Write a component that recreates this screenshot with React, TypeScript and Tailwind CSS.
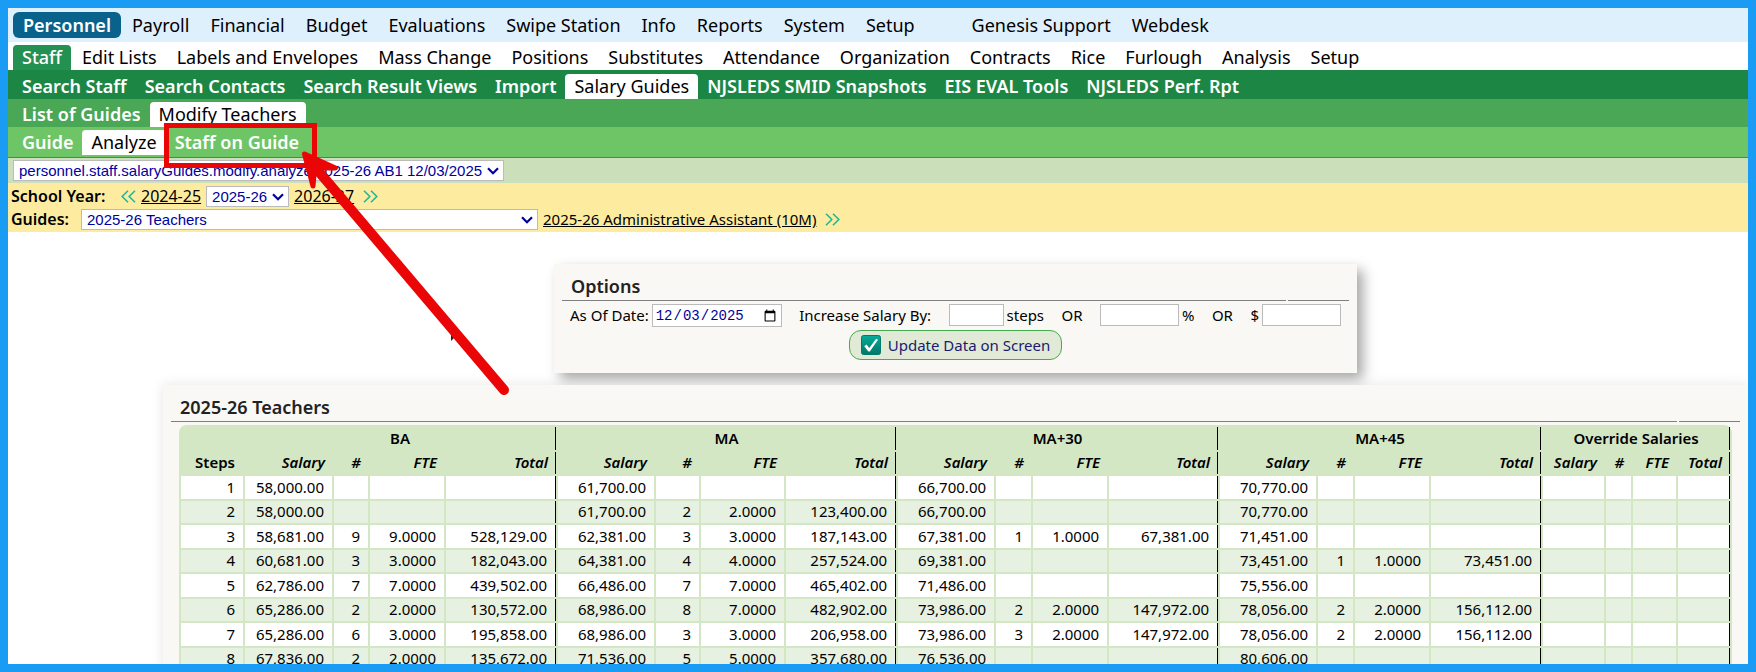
import clsx from 'clsx';
import type {ReactNode} from 'react';

type Tab = {label: string, active?: boolean, spaced?: boolean}

const modules: Tab[] = [
    {label: 'Personnel', active: true},
    {label: 'Payroll'},
    {label: 'Financial'},
    {label: 'Budget'},
    {label: 'Evaluations'},
    {label: 'Swipe Station'},
    {label: 'Info'},
    {label: 'Reports'},
    {label: 'System'},
    {label: 'Setup'},
    {label: 'Genesis Support', spaced: true},
    {label: 'Webdesk'},
];

const sections: Tab[] = [
    {label: 'Staff', active: true},
    {label: 'Edit Lists'},
    {label: 'Labels and Envelopes'},
    {label: 'Mass Change'},
    {label: 'Positions'},
    {label: 'Substitutes'},
    {label: 'Attendance'},
    {label: 'Organization'},
    {label: 'Contracts'},
    {label: 'Rice'},
    {label: 'Furlough'},
    {label: 'Analysis'},
    {label: 'Setup'},
];

const staffTabs: Tab[] = [
    {label: 'Search Staff'},
    {label: 'Search Contacts'},
    {label: 'Search Result Views'},
    {label: 'Import'},
    {label: 'Salary Guides', active: true},
    {label: 'NJSLEDS SMID Snapshots'},
    {label: 'EIS EVAL Tools'},
    {label: 'NJSLEDS Perf. Rpt'},
];

const guideTabs: Tab[] = [
    {label: 'List of Guides'},
    {label: 'Modify Teachers', active: true},
];

const modifyTabs: Tab[] = [
    {label: 'Guide'},
    {label: 'Analyze', active: true},
    {label: 'Staff on Guide'},
];

// Salary, #, FTE, Total
type Cell = [string, string, string, string]

const groups = ['BA', 'MA', 'MA+30', 'MA+45', 'Override Salaries'];
const empty: Cell = ['', '', '', ''];

const rows: Cell[][] = [
    [['58,000.00', '', '', ''], ['61,700.00', '', '', ''], ['66,700.00', '', '', ''], ['70,770.00', '', '', ''], empty],
    [['58,000.00', '', '', ''], ['61,700.00', '2', '2.0000', '123,400.00'], ['66,700.00', '', '', ''], ['70,770.00', '', '', ''], empty],
    [['58,681.00', '9', '9.0000', '528,129.00'], ['62,381.00', '3', '3.0000', '187,143.00'], ['67,381.00', '1', '1.0000', '67,381.00'], ['71,451.00', '', '', ''], empty],
    [['60,681.00', '3', '3.0000', '182,043.00'], ['64,381.00', '4', '4.0000', '257,524.00'], ['69,381.00', '', '', ''], ['73,451.00', '1', '1.0000', '73,451.00'], empty],
    [['62,786.00', '7', '7.0000', '439,502.00'], ['66,486.00', '7', '7.0000', '465,402.00'], ['71,486.00', '', '', ''], ['75,556.00', '', '', ''], empty],
    [['65,286.00', '2', '2.0000', '130,572.00'], ['68,986.00', '8', '7.0000', '482,902.00'], ['73,986.00', '2', '2.0000', '147,972.00'], ['78,056.00', '2', '2.0000', '156,112.00'], empty],
    [['65,286.00', '6', '3.0000', '195,858.00'], ['68,986.00', '3', '3.0000', '206,958.00'], ['73,986.00', '3', '2.0000', '147,972.00'], ['78,056.00', '2', '2.0000', '156,112.00'], empty],
    [['67,836.00', '2', '2.0000', '135,672.00'], ['71,536.00', '5', '5.0000', '357,680.00'], ['76,536.00', '', '', ''], ['80,606.00', '', '', ''], empty],
];

type TabRowProps = {
    tabs: Tab[],
    className: string,
    activeClassName: string
}
function TabRow(props: TabRowProps) {
    return (
        <nav className={clsx('flex items-end pl-[5px] text-lg leading-[25px] whitespace-nowrap', props.className)}>
            {props.tabs.map((t) => (
                <a
                    key={t.label}
                    href="#"
                    className={clsx('rounded-t px-[9px]', t.active && props.activeClassName)}
                >
                    {t.label}
                </a>
            ))}
        </nav>
    )
}

function Chevrons(props: {left?: boolean}) {
    return (
        <svg viewBox="0 0 15 13" className="w-[15px] h-[13px] shrink-0" fill="none" stroke="#1fb89a" strokeWidth="1.6">
            {props.left
                ? <path d="M7 .8 1.2 6.5 7 12.2M14 .8 8.2 6.5 14 12.2" />
                : <path d="M1 .8 6.8 6.5 1 12.2M8 .8 13.8 6.5 8 12.2" />}
        </svg>
    )
}

const control = 'border border-[#bbb] bg-white text-[#0000a0]';

type SelectProps = {
    id: string,
    label?: string,
    className: string,
    children: ReactNode
}
function Select(props: SelectProps) {
    return (
        <div className={clsx('relative', props.className)}>
            <select
                id={props.id}
                aria-label={props.label}
                className={clsx(control, 'block w-full h-[21px] pl-[5px] pr-5 appearance-none font-["Liberation_Sans",sans-serif] text-[15px] leading-[19px]')}
            >
                {props.children}
            </select>
            <svg viewBox="0 0 12 8" className="absolute right-[5px] top-[7px] w-3 h-2 pointer-events-none" fill="none" stroke="#0000a0" strokeWidth="2.2">
                <path d="M1 1.2 6 6.200 11 1.2" />
            </svg>
        </div>
    )
}

function Heading(props: {children: string}) {
    return (
        <>
            <h2 className="pl-[9px] text-lg leading-[27px] font-semibold text-[#222]">{props.children}</h2>
            <div className="flex gap-[2px]">
                <div className="grow h-px bg-[#808080]" />
                <div className="w-[61px] h-px bg-[#808080]" />
            </div>
        </>
    )
}

function SalaryTable() {
    return (
        <table className="w-full table-fixed border-separate border-spacing-[2px] rounded-t-lg bg-[#d3e7c5] text-[15px] leading-5 text-right">
            <colgroup>
                <col className="w-[62px]" />
                <col className="w-[87px]" />
                <col className="w-[34px]" />
                <col className="w-[74px]" />
                <col className="w-[110px]" />
                <col className="w-[96px]" />
                <col className="w-[43px]" />
                <col className="w-[83px]" />
                <col className="w-[110px]" />
                <col className="w-[96px]" />
                <col className="w-[35px]" />
                <col className="w-[74px]" />
                <col className="w-[109px]" />
                <col className="w-[96px]" />
                <col className="w-[35px]" />
                <col className="w-[74px]" />
                <col className="w-[110px]" />
                <col className="w-[61px]" />
                <col className="w-[25px]" />
                <col className="w-[43px]" />
                <col className="w-[52px]" />
            </colgroup>
            <thead>
                <tr className="h-[23px]">
                    <td />
                    {groups.map((g) => (
                        <th key={g} colSpan={4} scope="colgroup" className="pb-[2px] border-r border-black text-center font-semibold">{g}</th>
                    ))}
                </tr>
                <tr className="h-[22px]">
                    <th scope="col" className="pb-[2px] pr-2 font-semibold">Steps</th>
                    {groups.map((g) => ['Salary', '#', 'FTE', 'Total'].map((h) => (
                        <th
                            key={g + h}
                            scope="col"
                            className={clsx('pb-[2px] pr-[7px] font-semibold italic', h === 'Total' && 'border-r border-black')}
                        >
                            {h}
                        </th>
                    )))}
                </tr>
            </thead>
            <tbody>
                {rows.map((row, i) => (
                    <tr key={i} className="h-[22px] odd:h-[23px] bg-[#e6f1e1] odd:bg-white">
                        <th scope="row" className="pb-[2px] pr-2 font-normal bg-inherit">{i + 1}</th>
                        {row.map((cell, g) => cell.map((v, c) => (
                            <td
                                key={`${g}-${c}`}
                                className={clsx('pb-[2px] pr-2 bg-inherit', c === 3 && 'border-r border-black')}
                            >
                                {v}
                            </td>
                        )))}
                    </tr>
                ))}
            </tbody>
        </table>
    )
}

export default function App() {
    return (
        <div className="relative h-screen overflow-hidden border-8 border-[#1a9cf5] bg-white text-black font-['Noto_Sans',sans-serif]">
            <nav className="flex items-center h-[34px] gap-px pl-[5px] bg-[#dff0fd] text-lg whitespace-nowrap">
                {modules.map((t) => (
                    <a
                        key={t.label}
                        href="#"
                        className={clsx(
                            'px-[10px] leading-[26px]',
                            t.active && 'rounded-md bg-[#08628c] text-white font-semibold',
                            t.spaced && 'ml-9'
                        )}
                    >
                        {t.label}
                    </a>
                ))}
            </nav>
            <TabRow tabs={sections} className="gap-[2px] h-7" activeClassName="bg-[#249153] text-white font-medium" />
            <TabRow tabs={staffTabs} className="h-[29px] bg-[#1c8745] text-white font-semibold" activeClassName="bg-white text-black font-normal" />
            <TabRow tabs={guideTabs} className="h-7 bg-[#4aa755] text-white font-semibold" activeClassName="bg-white text-black font-normal" />
            <TabRow tabs={modifyTabs} className="h-[31px] pb-[2px] border-b border-[#707070] bg-[#6dc565] text-white font-semibold" activeClassName="bg-white text-black font-normal" />

            <div className="flex items-center h-[25px] pl-[5px] bg-[#cbdfba]">
                <Select id="screen" label="Screen" className="w-[491px]">
                    <option>personnel.staff.salaryGuides.modify.analyze 2025-26 AB1 12/03/2025</option>
                </Select>
            </div>

            <div className="flex flex-col gap-[2px] pt-[3px] pb-[2px] pl-[3px] bg-[#fdeca0] leading-[21px] whitespace-nowrap">
                <div className="flex items-center gap-[5px]">
                    <label htmlFor="year" className="w-[105px] font-semibold">School Year:</label>
                    <Chevrons left />
                    <a href="#" className="underline">2024-25</a>
                    <Select id="year" className="w-[83px]">
                        <option>2025-26</option>
                    </Select>
                    <a href="#" className="underline">2026-27</a>
                    <span className="pl-1"><Chevrons /></span>
                </div>
                <div className="flex items-center gap-[5px]">
                    <label htmlFor="guide" className="w-[65px] font-semibold">Guides:</label>
                    <Select id="guide" className="w-[457px]">
                        <option>2025-26 Teachers</option>
                    </Select>
                    <a href="#" className="text-[15px] underline">2025-26 Administrative Assistant (10M)</a>
                    <span className="pl-1"><Chevrons /></span>
                </div>
            </div>

            <div className="flex flex-col pt-8 pl-[155px]">
                <form className="self-center w-[803px] px-2 pt-[9px] pb-[13px] bg-[#f9f8f4] text-[15px] leading-[22px] whitespace-nowrap shadow-[6px_6px_12px_rgba(0,0,0,0.35)]">
                    <Heading>Options</Heading>
                    <div className="flex items-start justify-between pt-[3px] px-2">
                        <div className="flex items-start gap-[3px]">
                            <label htmlFor="asof">As Of Date:</label>
                            <input id="asof" type="date" defaultValue="2025-12-03" className={clsx(control, 'w-[130px] h-[23px] px-[2px] font-["Liberation_Mono",monospace] text-sm')} />
                        </div>
                        <label htmlFor="steps">Increase Salary By:</label>
                        <div className="flex items-start gap-[3px]">
                            <input id="steps" className={clsx(control, 'w-[55px] h-[22px]')} />
                            <span>steps</span>
                        </div>
                        <span>OR</span>
                        <div className="flex items-start gap-[3px]">
                            <input id="percent" aria-label="Percent" className={clsx(control, 'w-[79px] h-[22px]')} />
                            <label htmlFor="percent">%</label>
                        </div>
                        <span>OR</span>
                        <div className="flex items-start gap-[3px]">
                            <label htmlFor="dollars">$</label>
                            <input id="dollars" className={clsx(control, 'w-[79px] h-[22px]')} />
                        </div>
                    </div>
                    <button type="button" className="flex items-center gap-[7px] h-[30px] mt-[3px] mx-auto px-[11px] rounded-xl border border-[#46ab50] bg-[#e0ead6] text-[#1a1a70]">
                        <svg viewBox="0 0 20 20" className="size-5">
                            <defs>
                                <linearGradient id="tick" x1="0" y1="0" x2="0" y2="1">
                                    <stop offset="0" stopColor="#04ad9a" />
                                    <stop offset="1" stopColor="#047568" />
                                </linearGradient>
                            </defs>
                            <rect x=".5" y=".5" width="19" height="19" rx="2" fill="url(#tick)" stroke="#047a6c" />
                            <path d="M3.2 11.2 5.6 9.6 8.2 13 15.2 3.8 17 4.8 8.8 16.6H7.4Z" fill="#fff" />
                        </svg>
                        Update Data on Screen
                    </button>
                </form>

                <section className="mt-3 relative px-2 pt-[9px] bg-[#f9f8f4] shadow-[0_0_12px_rgba(0,0,0,0.1)]">
                    <Heading>2025-26 Teachers</Heading>
                    <div className="px-2 pt-[3px]">
                        <SalaryTable />
                    </div>
                </section>
            </div>

            {/* callout box and arrow */}
            <svg className="absolute -top-2 -left-2 w-[520px] h-[410px] pointer-events-none" viewBox="0 0 520 410" fill="none">
                <path d="M451 334v7l3-3Z" fill="#222" />
                <rect x="166.500" y="125.500" width="148" height="40" stroke="#ea0606" strokeWidth="5" />
                <path d="M320 173 504 390" stroke="#ea0606" strokeWidth="10" strokeLinecap="round" />
                <path d="M304.500 154 335.500 168 322 168 314 175 313 186Z" fill="#ea0606" stroke="#ea0606" strokeWidth="5" strokeLinejoin="round" />
            </svg>
        </div>
    )
}
